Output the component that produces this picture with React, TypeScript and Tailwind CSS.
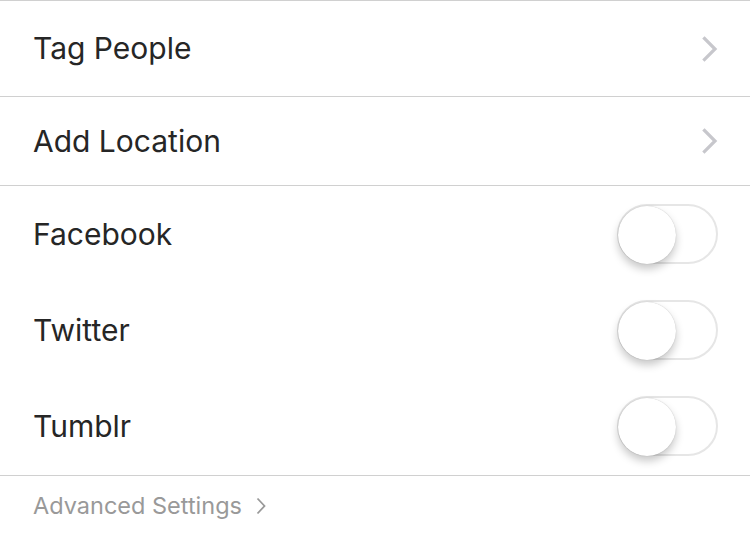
import React, { useState } from 'react';

function Chevron({ className = '' }: { className?: string }) {
  return (
    <svg width="16" height="26" viewBox="0 0 16 26" className={className}>
      <path d="M2.5 2.5 L13 13 L2.5 23.5" fill="none" stroke="#c7c7cc" strokeWidth="3.2" strokeLinecap="square" />
    </svg>
  );
}

function Toggle({ on, onChange }: { on: boolean; onChange: () => void }) {
  return (
    <button
      onClick={onChange}
      className={`relative w-[101px] h-[60px] rounded-full border-[2px] ${on ? 'bg-[#4cd964] border-[#4cd964]' : 'bg-white border-[#e6e6e6]'}`}
    >
      <span
        className={`absolute top-[-0.5px] ${on ? 'left-[41px]' : 'left-[-1px]'} w-[58px] h-[58px] rounded-full bg-white shadow-[0_5px_8px_rgba(0,0,0,0.22),0_0_1px_rgba(0,0,0,0.25)]`}
      />
    </button>
  );
}

export default function App() {
  const [shares, setShares] = useState({ Facebook: false, Twitter: false, Tumblr: false });

  return (
    <div className="w-[750px] h-[533px] bg-white overflow-hidden font-['Inter',sans-serif] text-[#262626]">
      <div className="border-t border-[#d0d0d0]" />

      {/* Links */}
      <div className="h-[96px] flex items-center justify-between pl-[33px] pr-[32px] border-b border-[#d0d0d0]">
        <span className="text-[30px]">Tag People</span>
        <Chevron />
      </div>
      <div className="h-[89px] flex items-center justify-between pl-[33px] pr-[32px] border-b border-[#d0d0d0]">
        <span className="text-[30px]">Add Location</span>
        <Chevron />
      </div>

      {/* Sharing toggles */}
      {(Object.keys(shares) as (keyof typeof shares)[]).map((name) => (
        <div key={name} className="h-[96px] flex items-center justify-between pl-[33px] pr-[32px]">
          <span className="text-[30px]">{name}</span>
          <Toggle on={shares[name]} onChange={() => setShares((s) => ({ ...s, [name]: !s[name] }))} />
        </div>
      ))}

      <div className="border-t border-[#d0d0d0] mt-[1px]" />
      <div className="h-[60px] flex items-center gap-[14px] pl-[33px] text-[#999999]">
        <span className="text-[23.5px]">Advanced Settings</span>
        <svg width="10" height="18" viewBox="0 0 10 18">
          <path d="M1.5 1.5 L8.5 9 L1.5 16.5" fill="none" stroke="#999999" strokeWidth="1.8" />
        </svg>
      </div>
    </div>
  );
}
